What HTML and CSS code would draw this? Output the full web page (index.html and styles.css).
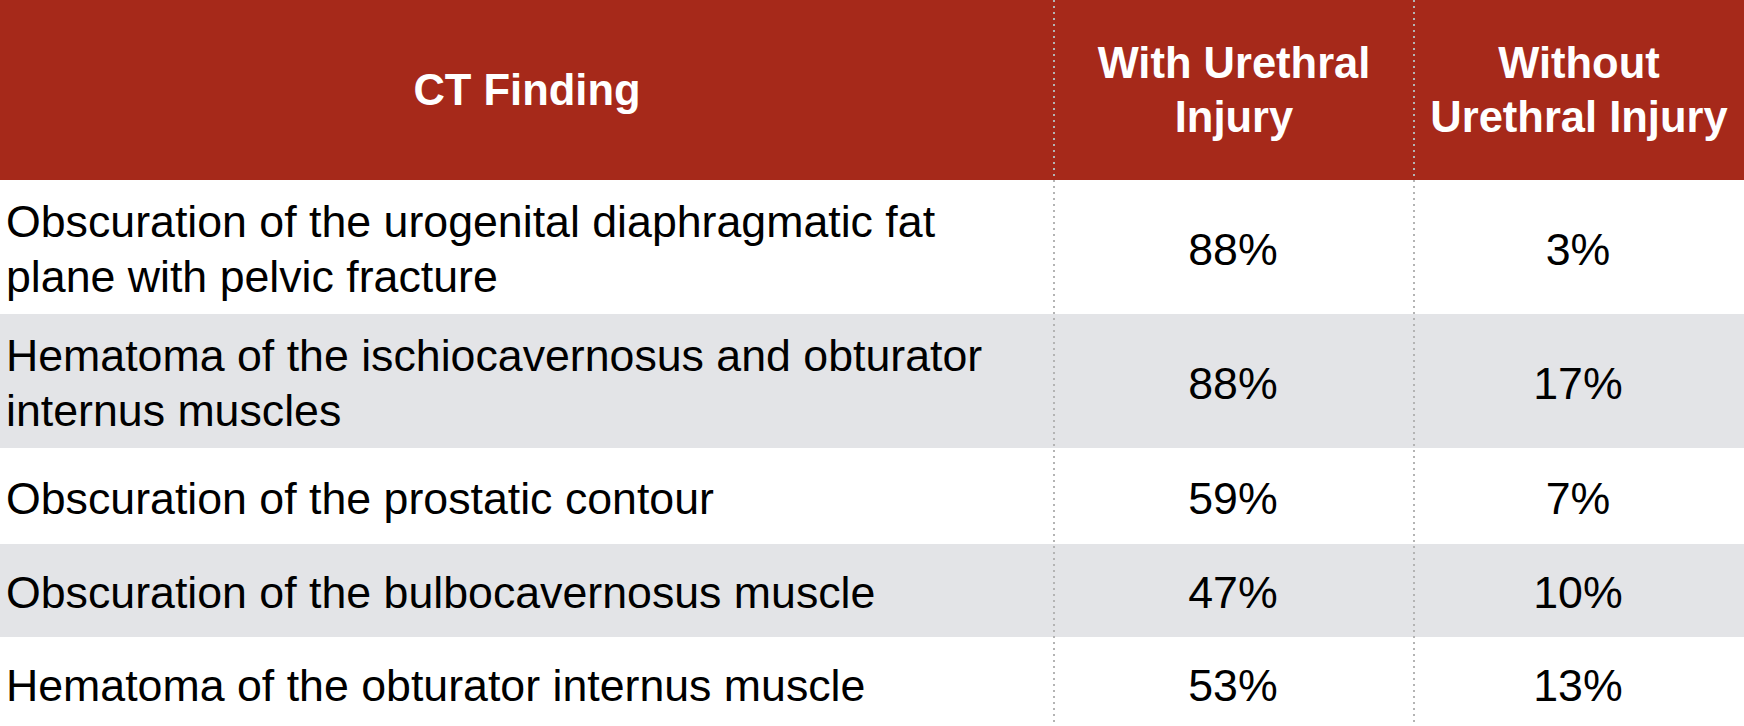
FILE: index.html
```html
<!DOCTYPE html>
<html lang="en">
<head>
<meta charset="utf-8">
<title>CT Findings</title>
<link rel="stylesheet" href="styles.css">
</head>
<body>
<div class="table">
  <div class="row head h-header">
    <div class="cell first">CT Finding</div>
    <div class="cell num">With Urethral<br>Injury</div>
    <div class="cell num">Without<br>Urethral Injury</div>
  </div>
  <div class="row h-two">
    <div class="cell first">Obscuration of the urogenital diaphragmatic fat<br>plane with pelvic fracture</div>
    <div class="cell num">88%</div>
    <div class="cell num">3%</div>
  </div>
  <div class="row alt h-two">
    <div class="cell first">Hematoma of the ischiocavernosus and obturator<br>internus muscles</div>
    <div class="cell num">88%</div>
    <div class="cell num">17%</div>
  </div>
  <div class="row h-one-tall">
    <div class="cell first">Obscuration of the prostatic contour</div>
    <div class="cell num">59%</div>
    <div class="cell num">7%</div>
  </div>
  <div class="row alt h-one">
    <div class="cell first">Obscuration of the bulbocavernosus muscle</div>
    <div class="cell num">47%</div>
    <div class="cell num">10%</div>
  </div>
  <div class="row h-one">
    <div class="cell first">Hematoma of the obturator internus muscle</div>
    <div class="cell num">53%</div>
    <div class="cell num">13%</div>
  </div>
</div>
</body>
</html>
```

FILE: styles.css
```css
html, body {
  margin: 0;
  padding: 0;
  background: #ffffff;
}

body {
  width: 1744px;
  height: 726px;
  overflow: hidden;
  font-family: "Liberation Sans", Arial, Helvetica, sans-serif;
  color: #000000;
}

.table {
  position: relative;
  width: 1744px;
}

.table::after {
  content: "";
  position: absolute;
  top: 0;
  left: 0;
  right: 0;
  height: 760px;
  pointer-events: none;
  background-image:
    linear-gradient(to bottom, #b4b4b4 2px, transparent 2px),
    linear-gradient(to bottom, #b4b4b4 2px, transparent 2px);
  background-size: 2px 6px, 2px 6px;
  background-position: 1053px 0, 1413px 0;
  background-repeat: repeat-y, repeat-y;
}

.row {
  display: grid;
  grid-template-columns: 1054px 360px 330px;
  background: #ffffff;
}

.row.alt {
  background: #e3e4e7;
}

.row.head {
  background: #a6291a;
  color: #ffffff;
  font-weight: bold;
}

.h-header { height: 180px; }
.h-two { height: 134px; }
.h-one-tall { height: 96px; }
.h-one { height: 93px; }

.cell {
  display: flex;
  align-items: center;
  font-size: 44.7px;
  line-height: 55px;
  padding: 4px 8px 0 6px;
  box-sizing: border-box;
}

.head .cell {
  font-size: 43.5px;
  line-height: 54px;
  justify-content: center;
  text-align: center;
  padding: 0 4px;
}

.cell.num {
  justify-content: center;
  text-align: center;
}
```
